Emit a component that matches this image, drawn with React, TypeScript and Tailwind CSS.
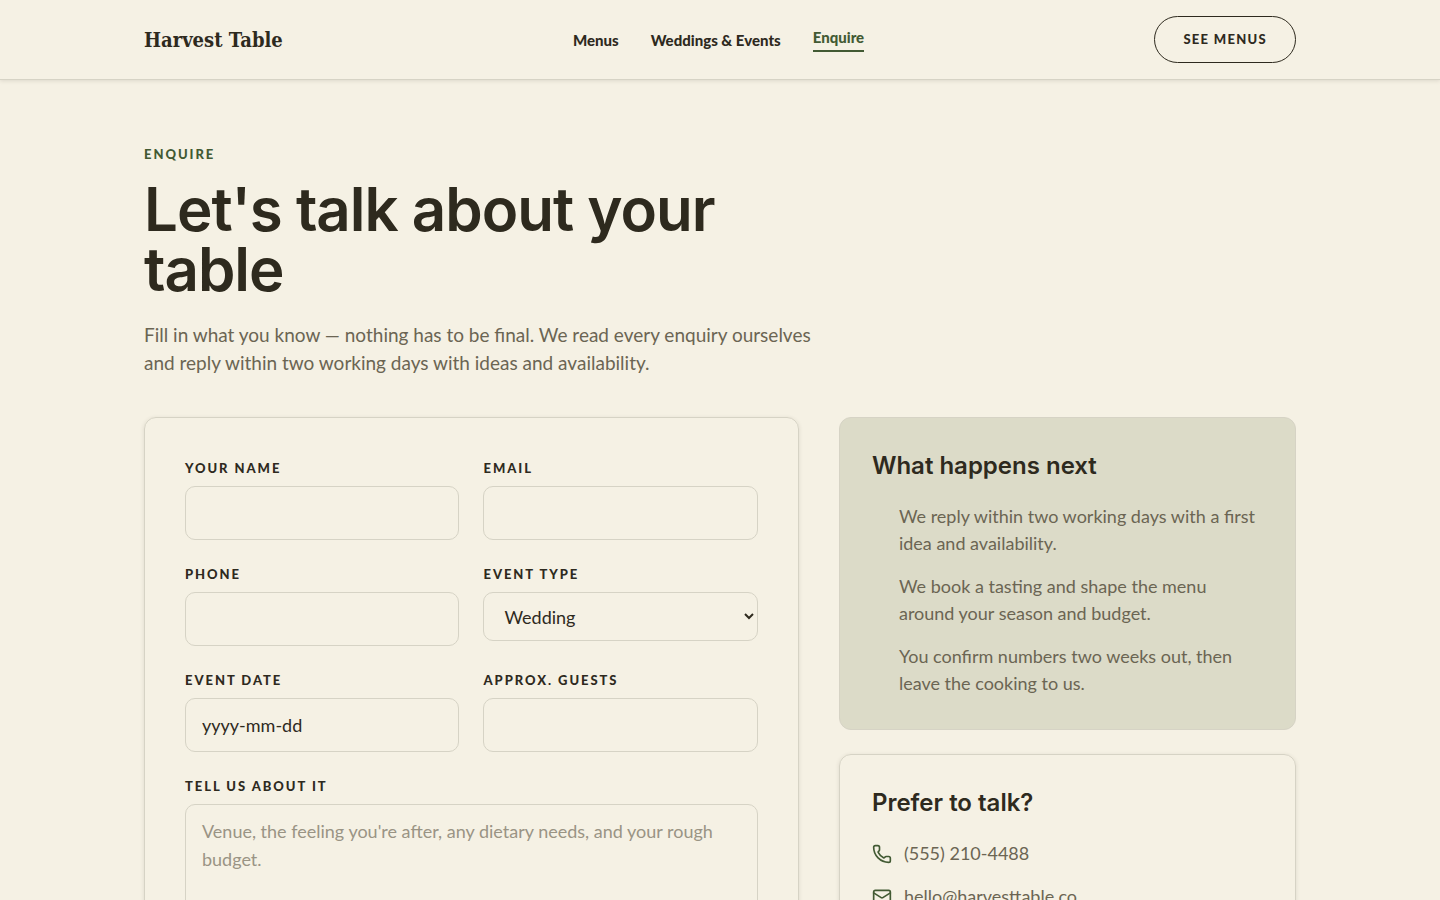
import { useState } from "react";
import { Mail, Phone } from "lucide-react";

const NAV_LINKS = [
  { label: "Menus", href: "#menus", active: false },
  { label: "Weddings & Events", href: "#weddings", active: false },
  { label: "Enquire", href: "#enquire", active: true },
];

const STEPS = [
  "We reply within two working days with a first idea and availability.",
  "We book a tasting and shape the menu around your season and budget.",
  "You confirm numbers two weeks out, then leave the cooking to us.",
];

const EVENT_TYPES = ["Wedding"];

const CONTROL =
  "w-full rounded-[10px] border border-[#d6d3c5] bg-transparent px-4 text-lg text-[#2e2a1e] outline-none focus:border-[#425a33]";

function Header() {
  return (
    <header className="border-b border-[#d6d3c5] bg-[#f5f1e4] shadow-[0_1px_4px_rgba(46,42,30,0.12)]">
      <div className="mx-auto flex max-w-6xl items-center justify-between py-4">
        <a
          href="#home"
          className="font-['DejaVu_Serif_Condensed','DejaVu_Serif',serif] text-xl font-bold"
        >
          Harvest Table
        </a>
        <nav className="flex items-center gap-8 text-[15px] leading-[18px] font-black">
          {NAV_LINKS.map((link) => (
            <a
              key={link.label}
              href={link.href}
              className={
                link.active
                  ? "border-b-2 border-[#425a33] pb-1 text-[#425a33]"
                  : "hover:text-[#425a33]"
              }
            >
              {link.label}
            </a>
          ))}
        </nav>
        <button
          type="button"
          className="h-[47px] rounded-full border border-[#2e2a1e] px-7 text-[13px] font-black tracking-widest uppercase"
        >
          See menus
        </button>
      </div>
    </header>
  );
}

function Field({
  id,
  label,
  wide,
  children,
}: {
  id: string;
  label: string;
  wide?: boolean;
  children: React.ReactNode;
}) {
  return (
    <div className={wide ? "col-span-2" : ""}>
      <label
        htmlFor={id}
        className="mb-2 block text-[13px] leading-5 font-black tracking-[0.15em] uppercase"
      >
        {label}
      </label>
      {children}
    </div>
  );
}

function EnquiryForm() {
  const [eventType, setEventType] = useState("Wedding");

  return (
    <form className="grid grid-cols-2 content-start gap-6 rounded-xl border border-[#d6d3c5] p-10 shadow-[0_1px_4px_rgba(46,42,30,0.12)]">
      <Field id="name" label="Your name">
        <input id="name" type="text" className={`${CONTROL} h-[54px]`} />
      </Field>
      <Field id="email" label="Email">
        <input id="email" type="email" className={`${CONTROL} h-[54px]`} />
      </Field>
      <Field id="phone" label="Phone">
        <input id="phone" type="tel" className={`${CONTROL} h-[54px]`} />
      </Field>
      <Field id="event-type" label="Event type">
        <select
          id="event-type"
          value={eventType}
          onChange={(e) => setEventType(e.target.value)}
          className={`${CONTROL} h-[49px]`}
        >
          {EVENT_TYPES.map((type) => (
            <option key={type}>{type}</option>
          ))}
        </select>
      </Field>
      <Field id="event-date" label="Event date">
        <input
          id="event-date"
          type="text"
          placeholder="yyyy-mm-dd"
          className={`${CONTROL} h-[54px] placeholder:text-[#2e2a1e]`}
        />
      </Field>
      <Field id="guests" label="Approx. guests">
        <input id="guests" type="text" inputMode="numeric" className={`${CONTROL} h-[54px]`} />
      </Field>
      <Field id="message" label="Tell us about it" wide>
        <textarea
          id="message"
          rows={5}
          placeholder="Venue, the feeling you're after, any dietary needs, and your rough budget."
          className={`${CONTROL} block resize-none py-3 leading-7 placeholder:text-[#9a9484]`}
        />
      </Field>
    </form>
  );
}

function Sidebar() {
  return (
    <aside className="flex flex-col gap-6 text-lg leading-[27px] text-[#6b6553]">
      <section className="rounded-xl border border-[#d6d3c5] bg-[#dcdbc8] p-8">
        <h2 className="mb-[21px] font-['Inter',sans-serif] text-2xl font-semibold text-[#2e2a1e]">
          What happens next
        </h2>
        <ol className="flex flex-col gap-4 pl-[27px]">
          {STEPS.map((step) => (
            <li key={step}>{step}</li>
          ))}
        </ol>
      </section>
      <section className="rounded-xl border border-[#d6d3c5] p-8 shadow-[0_1px_4px_rgba(46,42,30,0.12)]">
        <h2 className="mb-[21px] font-['Inter',sans-serif] text-2xl font-semibold text-[#2e2a1e]">
          Prefer to talk?
        </h2>
        <div className="flex flex-col gap-4">
          <a href="tel:5552104488" className="flex items-center gap-3">
            <Phone size={20} className="text-[#425a33]" />
            (555) 210-4488
          </a>
          <a href="mailto:hello@harvesttable.co" className="flex items-center gap-3">
            <Mail size={20} className="text-[#425a33]" />
            hello@harvesttable.co
          </a>
        </div>
      </section>
    </aside>
  );
}

export default function App() {
  return (
    <div className="min-h-screen bg-[#f5f1e4] font-['Lato',sans-serif] text-[#2e2a1e]">
      <Header />
      <main className="mx-auto max-w-6xl pt-16 pb-16">
        <p className="text-[13px] leading-5 font-black tracking-[0.15em] text-[#425a33] uppercase">
          Enquire
        </p>
        <h1 className="mt-[15px] max-w-[680px] font-['Inter',sans-serif] text-6xl leading-[60px] font-semibold tracking-[-1px]">
          Let's talk about your table
        </h1>
        <p className="mt-[22px] max-w-[680px] text-[19px] leading-7 text-[#6b6553]">
          Fill in what you know — nothing has to be final. We read every enquiry ourselves
          and reply within two working days with ideas and availability.
        </p>
        <div className="mt-10 grid grid-cols-[1.433fr_1fr] items-start gap-10">
          <EnquiryForm />
          <Sidebar />
        </div>
      </main>
    </div>
  );
}
